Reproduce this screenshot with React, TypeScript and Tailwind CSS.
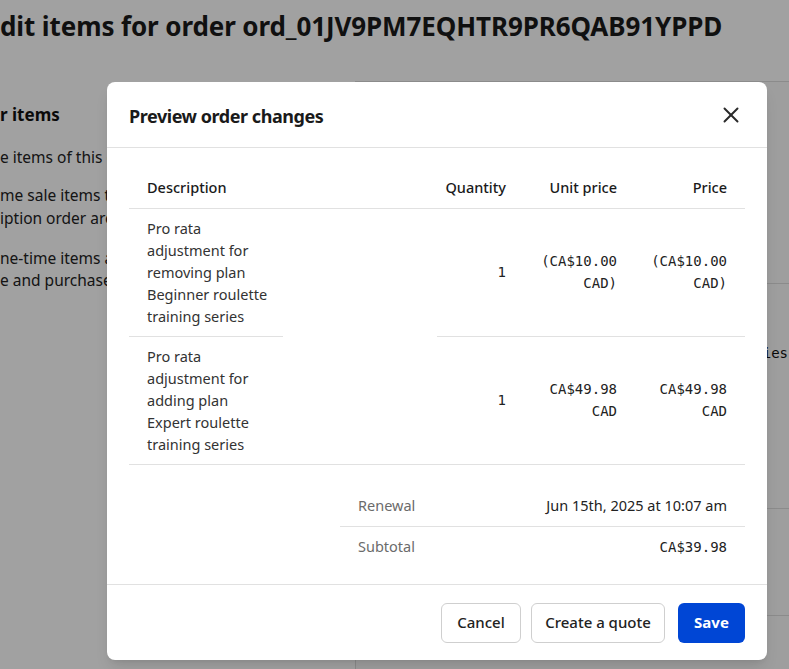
import React from "react";
import { X } from "lucide-react";

const sans = { fontFamily: '"Noto Sans", "Open Sans", Arial, sans-serif' };
const mono = { fontFamily: '"DejaVu Sans Mono", "Liberation Mono", monospace' };

type Row = { desc: string[]; qty: string; unit: string[]; price: string[] };

const rows: Row[] = [
  {
    desc: ["Pro rata", "adjustment for", "removing plan", "Beginner roulette", "training series"],
    qty: "1",
    unit: ["(CA$10.00", "CAD)"],
    price: ["(CA$10.00", "CAD)"],
  },
  {
    desc: ["Pro rata", "adjustment for", "adding plan", "Expert roulette", "training series"],
    qty: "1",
    unit: ["CA$49.98", "CAD"],
    price: ["CA$49.98", "CAD"],
  },
];

function Lines({ items }: { items: string[] }) {
  return (
    <>
      {items.map((t, i) => (
        <React.Fragment key={i}>
          {t}
          {i < items.length - 1 && <br />}
        </React.Fragment>
      ))}
    </>
  );
}

export default function App() {
  return (
    <div className="relative w-[789px] h-[669px] overflow-hidden bg-white text-[#1a1a1a]" style={sans}>
      {/* underlying page */}
      <div className="flex flex-col">
        <h1 className="pt-[10px] h-[81px] text-[26px] leading-8 font-bold whitespace-nowrap tracking-[-0.1px]">
          dit items for order ord_01JV9PM7EQHTR9PR6QAB91YPPD
        </h1>
        <div className="flex">
          <div className="w-[355px] shrink-0 pt-[22px] text-[15.5px] text-[#222]">
            <div className="text-[17px] leading-6 font-bold text-[#111]">r items</div>
            <p className="mt-[19px] leading-[22px] whitespace-nowrap">e items of this o</p>
            <p className="mt-[16px] leading-[23px] whitespace-nowrap">
              <Lines items={["me sale items th", "iption order are"]} />
            </p>
            <p className="mt-[17px] leading-[22px] whitespace-nowrap">
              <Lines items={["ne-time items ar", "e and purchased"]} />
            </p>
          </div>
          <div className="flex-1 border-l border-t border-[#dcdcdc] bg-[#fafafa] h-[600px] flex flex-col">
            <div className="h-[202px] border-b border-[#dcdcdc]" />
            <div className="h-[225px] border-b border-[#dcdcdc] pt-[58px] flex justify-end pr-[1px]">
              <span className="text-[14px] leading-[22px] text-[#111]" style={mono}>ies</span>
            </div>
            <div className="h-[107px] border-b border-[#dcdcdc]" />
          </div>
        </div>
      </div>

      {/* overlay */}
      <div className="absolute inset-0 bg-black/[0.37]" />

      {/* modal */}
      <div className="absolute left-[107px] top-[82px] w-[660px] h-[578px] bg-white rounded-lg shadow-lg flex flex-col">
        <div className="h-[66px] flex items-center justify-between pl-[22px] pr-[23px] border-b border-[#e1e1e1]">
          <h2 className="mt-[3px] text-[18px] font-bold text-[#1a1a1a] tracking-[-0.45px]">Preview order changes</h2>
          <X size={26} strokeWidth={1.8} className="mt-[1px] text-[#2a2a2a]" />
        </div>

        <div className="px-[22px] pt-[20px]">
          <table className="w-[616px] border-collapse text-[14.5px] text-[#333]" style={{ tableLayout: "fixed" }}>
            <colgroup>
              <col className="w-[154px]" />
              <col className="w-[154px]" />
              <col className="w-[87px]" />
              <col className="w-[111px]" />
              <col className="w-[110px]" />
            </colgroup>
            <thead>
              <tr className="h-[40px] text-[#1a1a1a]">
                <th className="text-left font-medium pl-[18px] border-b border-[#e1e1e1] align-middle">Description</th>
                <th className="border-b border-[#e1e1e1]" />
                <th className="text-right font-medium pr-[18px] border-b border-[#e1e1e1] whitespace-nowrap">Quantity</th>
                <th className="text-right font-medium pr-[18px] border-b border-[#e1e1e1] whitespace-nowrap">Unit price</th>
                <th className="text-right font-medium pr-[18px] border-b border-[#e1e1e1]">Price</th>
              </tr>
            </thead>
            <tbody>
              {rows.map((r, i) => {
                const last = i === rows.length - 1;
                const b = "border-b border-[#e1e1e1]";
                const num = `text-right pr-[18px] align-middle text-[14px] leading-[22px] text-[#222] ${b}`;
                return (
                  <tr key={i}>
                    <td className={`pl-[18px] pt-[8px] pb-[9px] leading-[22px] align-middle whitespace-nowrap ${b}`}>
                      <Lines items={r.desc} />
                    </td>
                    <td className={last ? b : ""} />
                    <td className={num} style={mono}>
                      {r.qty}
                    </td>
                    <td className={num} style={mono}>
                      <Lines items={r.unit} />
                    </td>
                    <td className={num} style={mono}>
                      <Lines items={r.price} />
                    </td>
                  </tr>
                );
              })}
            </tbody>
          </table>

          <div className="ml-auto w-[405px] mt-[21px] text-[14.5px]">
            <div className="h-[41px] flex items-center justify-between px-[18px] border-b border-[#e1e1e1]">
              <span className="text-[#6b6b6b]">Renewal</span>
              <span className="text-[#222]">Jun 15th, 2025 at 10:07 am</span>
            </div>
            <div className="h-[41px] flex items-center justify-between px-[18px]">
              <span className="text-[#6b6b6b]">Subtotal</span>
              <span className="text-[14px] text-[#222]" style={mono}>CA$39.98</span>
            </div>
          </div>
        </div>

        <div className="mt-auto h-[76px] border-t border-[#e1e1e1] flex items-center justify-end px-[22px]">
          <button className="h-[40px] w-[80px] rounded-md border border-[#cfcfcf] bg-white text-[15px] font-medium text-[#222]">
            Cancel
          </button>
          <button className="ml-[10px] h-[40px] w-[134px] rounded-md border border-[#cfcfcf] bg-white text-[15px] font-medium text-[#222]">
            Create a quote
          </button>
          <button className="ml-[13px] h-[40px] w-[67px] rounded-md bg-[#0046d5] text-[15px] font-bold text-white">
            Save
          </button>
        </div>
      </div>
    </div>
  );
}
